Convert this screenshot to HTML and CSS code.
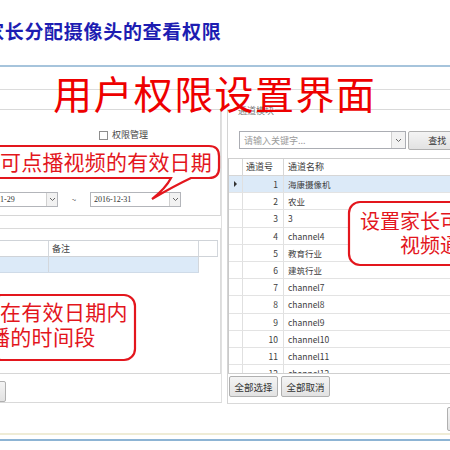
FILE: index.html
```html
<!DOCTYPE html>
<html lang="zh-CN">
<head>
<meta charset="utf-8">
<title>用户权限设置界面</title>
<link rel="stylesheet" href="styles.css">
</head>
<body>
<h1 class="title">家长分配摄像头的查看权限</h1>
<div class="window">
  <div class="tabbar"></div>
  <div class="gap"></div>
  <div class="main">
    <div class="left">
      <div class="date-box">
        <div class="chk-row"><span class="cbox"></span><span class="chk-label">权限管理</span></div>
        <div class="date-row">
          <div class="combo cmb1"><span class="val">1-29</span><span class="arrow"><svg width="7" height="5" viewBox="0 0 7 5"><path d="M1 1 L3.5 3.5 L6 1" fill="none" stroke="#666" stroke-width="1"/></svg></span></div>
          <span class="tilde">~</span>
          <div class="combo cmb2"><span class="val">2016-12-31</span><span class="arrow"><svg width="7" height="5" viewBox="0 0 7 5"><path d="M1 1 L3.5 3.5 L6 1" fill="none" stroke="#666" stroke-width="1"/></svg></span></div>
        </div>
      </div>
      <div class="time-box">
        <div class="lgrid">
          <div class="lhead"><div class="la"></div><div class="lb">备注</div><div class="lc"></div></div>
          <div class="lrow"><div class="la"></div><div class="lb"></div></div>
        </div>
      </div>
      <div class="lbtn-row"><span class="btn lbtn">删除</span></div>
    </div>
    <div class="right">
      <div class="legend">通道模块</div>
      <div class="search-row">
        <div class="search"><span class="ph">请输入关键字...</span><span class="arrow"><svg width="7" height="5" viewBox="0 0 7 5"><path d="M1 1 L3.5 3.5 L6 1" fill="none" stroke="#666" stroke-width="1"/></svg></span></div>
        <span class="btn find">查找</span>
      </div>
      <div class="table">
        <div class="tr th"><div class="n0"></div><div class="n1">通道号</div><div class="n2">通道名称</div></div>
        <div class="tr sel"><div class="n0"><span class="tri"></span></div><div class="n1">1</div><div class="n2">海康摄像机</div></div>
        <div class="tr"><div class="n0"></div><div class="n1">2</div><div class="n2">农业</div></div>
        <div class="tr"><div class="n0"></div><div class="n1">3</div><div class="n2">3</div></div>
        <div class="tr"><div class="n0"></div><div class="n1">4</div><div class="n2">channel4</div></div>
        <div class="tr"><div class="n0"></div><div class="n1">5</div><div class="n2">教育行业</div></div>
        <div class="tr"><div class="n0"></div><div class="n1">6</div><div class="n2">建筑行业</div></div>
        <div class="tr"><div class="n0"></div><div class="n1">7</div><div class="n2">channel7</div></div>
        <div class="tr"><div class="n0"></div><div class="n1">8</div><div class="n2">channel8</div></div>
        <div class="tr"><div class="n0"></div><div class="n1">9</div><div class="n2">channel9</div></div>
        <div class="tr"><div class="n0"></div><div class="n1">10</div><div class="n2">channel10</div></div>
        <div class="tr"><div class="n0"></div><div class="n1">11</div><div class="n2">channel11</div></div>
        <div class="tr"><div class="n0"></div><div class="n1">12</div><div class="n2">channel12</div></div>
      </div>
      <div class="rbtn-row"><span class="btn b1">全部选择</span><span class="btn b2">全部取消</span></div>
    </div>
  </div>
  <div class="footer"><span class="btn fbtn">确定</span></div>
  <div class="line-beige"></div>
  <div class="line-blue"></div>
</div>

<div class="big-title">用户权限设置界面</div>

<div class="callout ca">
  <svg class="shape" width="234" height="58" viewBox="0 0 234 58"><path d="M12 2 H221 Q231 2 231 12 V24 Q231 34 221 34 H203 Q186 42 164 55 Q178 44 183 34 H12 Q2 34 2 24 V12 Q2 2 12 2 Z" fill="#fff" stroke="#e3161d" stroke-width="2.2"/></svg>
  <div class="ctext ta">可点播视频的有效日期</div>
</div>

<div class="callout cb">
  <svg class="shape" width="150" height="70" viewBox="0 0 150 70"><rect x="2" y="2" width="145" height="65" rx="11" fill="#fff" stroke="#e3161d" stroke-width="2.2"/></svg>
  <div class="ctext tb"><span class="l1">在有效日期内</span><span class="l2">播的时间段</span></div>
</div>

<div class="callout cc">
  <svg class="shape" width="200" height="68" viewBox="0 0 200 68"><rect x="2" y="2" width="190" height="63" rx="11" fill="#fff" stroke="#e3161d" stroke-width="2.2"/></svg>
  <div class="ctext tc">设置家长可查看的<br>视频通道</div>
</div>
</body>
</html>
```
FILE: styles.css
```css
* { box-sizing: border-box; margin: 0; padding: 0; }
html, body { width: 450px; height: 450px; overflow: hidden; background: #fff; }
body { position: relative; font-family: "Noto Sans CJK SC", "Noto Sans", sans-serif; color: #3c3c3c; }

.title {
  height: 65px; padding-top: 21px; margin-left: -15px;
  font-size: 19px; line-height: 19px; font-weight: bold;
  color: #1d1db2; letter-spacing: 0.7px; white-space: nowrap;
}

.window { border-top: 2px solid #a6c4dc; }
.tabbar { height: 23px; border-bottom: 1px solid #dcdcdc; }
.gap { height: 19px; }
.main { display: flex; height: 295px; }

/* left side */
.left {
  width: 224px; height: 294px; margin-left: -1px;
  border-top: 1px solid #d9d9d9; border-right: 1px solid #e0e0e0; border-bottom: 1px solid #d9d9d9;
  display: flex; flex-direction: column;
}
.date-box {
  width: 222px; height: 106px;
  border-right: 1px solid #dcdcdc; border-bottom: 1px solid #d6d6d6;
}
.chk-row { display: flex; align-items: center; height: 12px; margin-top: 19px; padding-left: 100px; gap: 4px; }
.cbox { width: 9px; height: 9px; border: 1px solid #8e8e8e; background: #fff; }
.chk-label { font-size: 9px; line-height: 12px; color: #444; }

.date-row { display: flex; align-items: center; height: 15px; margin-top: 51px; }
.combo {
  display: flex; align-items: center; justify-content: space-between;
  height: 15px; border: 1px solid #b3b5ba; background: #fff;
}
.combo .val { font-family: "Liberation Serif", serif; font-size: 8px; color: #333; }
.combo .arrow, .search .arrow {
  width: 11px; height: 13px; display: flex; align-items: center; justify-content: center;
  border-left: 1px solid #d0d0d0; background: #f2f2f2;
}
.cmb1 { width: 80px; margin-left: -21px; padding-left: 21px; }
.tilde { width: 32px; text-align: center; font-size: 8px; color: #555; }
.cmb2 { width: 91px; padding-left: 3px; }

.time-box {
  width: 222px; height: 146px; margin-top: 12px;
  border-top: 1px solid #dadada; border-right: 1px solid #dcdcdc; border-bottom: 1px solid #d6d6d6;
}
.lgrid { margin-top: 11px; }
.lhead { display: flex; height: 17px; border-top: 1px solid #cfd3d8; border-bottom: 1px solid #cfd3d8; width: 219px; }
.lhead > div, .lrow > div { border-right: 1px solid #d3d7dc; }
.la { width: 50px; }
.lb { width: 150px; font-size: 9px; line-height: 15px; padding-left: 3px; color: #444; }
.lc { width: 19px; }
.lrow { display: flex; height: 16px; width: 200px; background: #dceaf8; border-bottom: 1px solid #cfdbe8; }

.btn {
  display: inline-flex; align-items: center; justify-content: center;
  height: 21px; border: 1px solid #b0b0b0; border-radius: 2px;
  background: linear-gradient(#f4f4f4, #e2e2e2);
  font-size: 9.5px; color: #333;
}
.lbtn-row { margin-top: 3px; }
.lbtn { width: 48px; margin-left: -41px; color: transparent; }

/* right side */
.right {
  width: 240px; height: 295px; margin-left: 5px;
  border-top: 1px solid #d9d9d9; border-left: 1px solid #d4d4d4; border-bottom: 1px solid #d9d9d9;
}
.legend {
  display: block; width: fit-content; margin-top: -5px; margin-left: 9px; padding: 0 1px;
  font-size: 9px; line-height: 11px; height: 11px; color: #777; background: #fff;
}
.search-row { display: flex; height: 18px; margin-top: 15px; }
.search {
  display: flex; align-items: center; justify-content: space-between;
  width: 168px; height: 18px; margin-left: 11px; padding-left: 4px;
  border: 1px solid #abadb3; background: #fff;
}
.search .arrow { width: 14px; height: 16px; }
.ph { font-size: 9px; color: #9c9c9c; }
.find { width: 60px; height: 19px; margin-left: 2px; font-size: 9px; }

.table {
  height: 216px; margin-top: 9px; overflow: hidden;
  border-top: 1px solid #cfcfcf; border-left: 1px solid #c9c9c9; border-bottom: 1px solid #cfcfcf;
}
.tr {
  display: grid; grid-template-columns: 14px 41px 1fr;
  height: 17.2px; border-bottom: 1px solid #e3e3e3;
  font-size: 8.5px; line-height: 16px; color: #3c3c3c;
}
.tr > div { border-right: 1px solid #e0e0e0; white-space: nowrap; overflow: hidden; }
.tr .n2 { border-right: none; padding-left: 4px; }
.tr .n1 { text-align: right; padding-right: 5px; }
.th { height: 17px; border-bottom: 1px solid #d6d6d6; font-size: 9px; }
.th .n1 { text-align: left; padding-left: 3px; padding-right: 0; }
.th > div { border-right-color: #d6d6d6; }
.sel { background: #dceaf8; }
.n0 { display: flex; align-items: center; justify-content: center; }
.tri { width: 0; height: 0; border-left: 3px solid #333; border-top: 3px solid transparent; border-bottom: 3px solid transparent; }

.rbtn-row { display: flex; gap: 3px; margin-top: 2px; padding-left: 1px; }
.b1 { width: 49px; }
.b2 { width: 49px; }

.footer { height: 29px; display: flex; justify-content: flex-end; align-items: center; padding-top: 1px; }
.fbtn { width: 40px; height: 24px; margin-right: -37px; color: transparent; }
.line-beige { height: 2px; background: #efecd6; }
.line-blue { height: 2px; margin-top: 4px; background: #8db4d4; }

/* annotations laid over the screenshot */
.big-title {
  position: absolute; left: 53px; top: 73px;
  font-size: 39px; line-height: 39px; letter-spacing: 1.4px;
  color: #ee0000; white-space: nowrap;
}
.callout { position: absolute; }
.callout .shape { position: absolute; left: 0; top: 0; }
.ctext { position: absolute; color: #e3161d; white-space: nowrap; }
.ca { left: -12px; top: 144px; width: 234px; height: 58px; }
.ta { left: 12px; top: 7px; font-size: 21px; line-height: 21px; letter-spacing: 0.2px; }
.cb { left: -12px; top: 293px; width: 150px; height: 70px; }
.tb { left: 0; top: 6px; font-size: 21px; line-height: 25px; letter-spacing: 0.3px; }
.tb span { display: block; }
.tb .l1 { margin-left: 12px; }
.tb .l2 { margin-left: 1px; }
.cc { left: 347px; top: 200px; width: 200px; height: 68px; }
.tc { left: 0; top: 9px; width: 186px; text-align: center; font-size: 20px; line-height: 24px; }
```
